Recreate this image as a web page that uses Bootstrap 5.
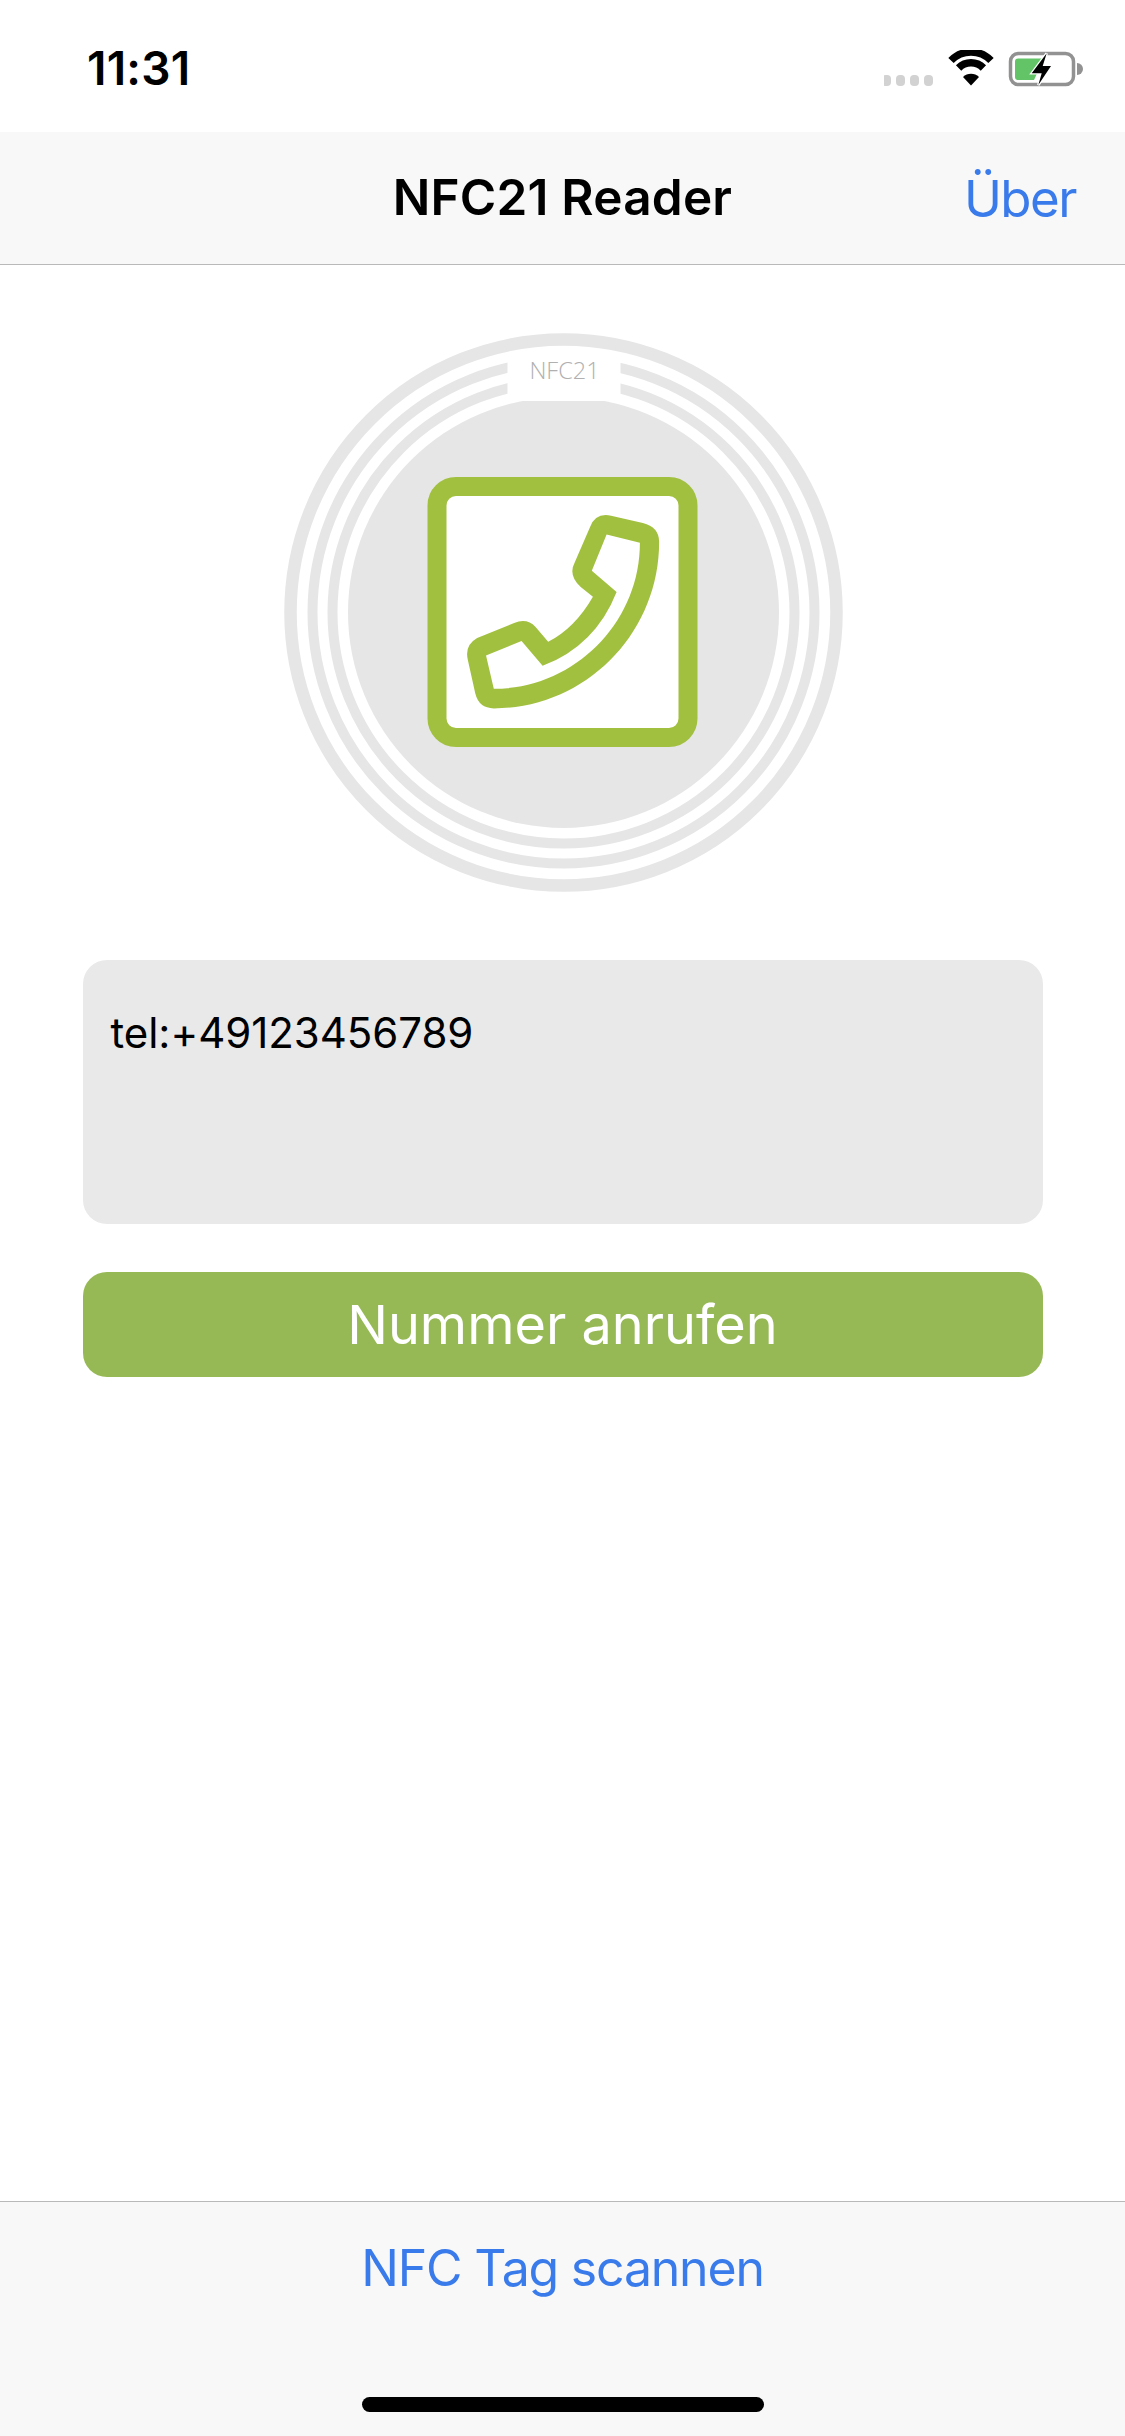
<!DOCTYPE html>
<html lang="de">
<head>
<meta charset="utf-8">
<title>NFC21 Reader</title>
<link href="https://cdn.jsdelivr.net/npm/bootstrap@5.3.0/dist/css/bootstrap.min.css" rel="stylesheet">
<style>
  html, body { height: 2436px; }
  body { font-family: Inter, "Liberation Sans", sans-serif; background: #fff; color: #000; }
  .status-strip { height: 132px; padding: 0 41px 0 87px; }
  .clock { font-size: 46px; font-weight: 600; line-height: 1; letter-spacing: .2px; margin-top: 4px; }
  .status-icons { display: block; margin-top: 8px; }
  .title-strip { height: 133px; background: #f8f8f8; border-bottom: 1px solid #b9b9b9; display: grid; grid-template-columns: 1fr auto 1fr; align-items: center; }
  .title-text { font-size: 49.5px; font-weight: 600; letter-spacing: .2px; line-height: 1; }
  .link-blue { color: #3a7bec; text-decoration: none; }
  .over-link { font-size: 51px; letter-spacing: -1.5px; line-height: 1; justify-self: end; margin-right: 49px; }
  .tag-art { display: block; width: 580px; height: 580px; margin-top: 55px; }
  .content-box { width: 960px; margin: 0 auto; }
  .value-box { height: 264px; margin-top: 60px; padding: 48px 28px; background: #e9e9e9; border: 0; border-radius: 24px; font-size: 42px; line-height: 1.2; color: #000; letter-spacing: -.05px; }
  .call-btn { height: 105px; margin-top: 48px; padding: 0; background: #97b955; border: 0; border-radius: 24px; color: #fff; font-size: 54px; font-weight: 400; line-height: 1; letter-spacing: 0; }
  .bottom-strip { height: 235px; background: #f8f8f8; border-top: 1px solid #b9b9b9; padding-top: 36px; }
  .scan-link { font-size: 50px; line-height: 60px; letter-spacing: -1.2px; }
  .home-bar { width: 402px; height: 15px; margin-top: 99px; background: #000; border-radius: 8px; }
</style>
</head>
<body class="m-0 d-flex flex-column">
  <div class="status-strip d-flex justify-content-between align-items-center bg-white">
    <span class="clock">11:31</span>
    <svg class="status-icons" width="200" height="40" viewBox="884 50 200 40">
      <g fill="#d2d2d2"><rect x="882" y="75" width="9" height="11" rx="4"/><rect x="896" y="75" width="9" height="11" rx="4"/><rect x="910" y="75" width="9" height="11" rx="4"/><rect x="924" y="75" width="9" height="11" rx="4"/></g>
      <g fill="none" stroke="#000" stroke-width="7.5">
        <path d="M951 60.5 A28 28 0 0 1 991 60.5"/>
        <path d="M958.6 68 A17.5 17.5 0 0 1 983.4 68"/>
      </g>
      <path d="M971 85.5 L963 77 A11.5 11.5 0 0 1 979 77 Z" fill="#000"/>
      <rect x="1010.5" y="53.5" width="63" height="31" rx="8" fill="none" stroke="#929292" stroke-width="3.5"/>
      <path d="M1018 58.5 H1044 L1034 80 H1018 Q1015 80 1015 77 V61.5 Q1015 58.5 1018 58.5 Z" fill="#62c466"/>
      <path d="M1077 63 A6 6 0 0 1 1077 75 Z" fill="#929292"/>
      <path d="M1046.7 53.3 L1031.7 73.3 L1041.7 73.3 L1038.3 85 L1051 66 L1042.7 66 Z" fill="#000" stroke="#fff" stroke-width="2.5" paint-order="stroke"/>
    </svg>
  </div>
  <header class="title-strip">
    <span></span>
    <span class="title-text">NFC21 Reader</span>
    <a class="over-link link-blue" href="#">Über</a>
  </header>
  <main class="flex-grow-1">
    <svg class="tag-art mx-auto" viewBox="272.5 320 580 580" role="img" aria-label="NFC21 Tag">
      <g fill="none" stroke="#e6e6e6">
        <circle cx="563" cy="612.5" r="273" stroke-width="12.5"/>
        <circle cx="563" cy="612.5" r="251" stroke-width="10"/>
        <circle cx="563" cy="612.5" r="231" stroke-width="10"/>
      </g>
      <circle cx="563" cy="612.5" r="215.5" fill="#e5e6e5"/>
      <rect x="507" y="352" width="113" height="49" fill="#fff"/>
      <text x="564" y="379" text-anchor="middle" font-family="Open Sans, sans-serif" font-weight="300" font-size="23.5" fill="#b0b0b0">NFC21</text>
      <rect x="436.5" y="486.5" width="251" height="251" rx="19" fill="#fff" stroke="#a2c03f" stroke-width="19"/>
      <g transform="translate(269.5 320) scale(.3699)">
        <path fill="#a2c03f" fill-rule="evenodd" d="M922 529 L1008 549 Q1052 560 1052 600 C1052 850 850 1050 605 1050 Q565 1050 555 1010 L535 920 Q525 880 560 860 L660 819 Q695 805 718 830 L752 870 Q825 832 873 748 L840 722 Q805 690 824 655 L865 560 Q880 520 922 529 Z M910 580 L1000 602 C1000 820 820 997 605 997 L584 907 L680 868 L737 935 Q880 880 937 735 L870 678 Z"/>
      </g>
    </svg>
    <div class="content-box">
      <div class="value-box form-control">tel:+49123456789</div>
      <button type="button" class="call-btn btn w-100">Nummer anrufen</button>
    </div>
  </main>
  <footer class="bottom-strip text-center d-flex flex-column align-items-center">
    <a class="scan-link link-blue" href="#">NFC Tag scannen</a>
    <div class="home-bar"></div>
  </footer>
  <script src="https://cdn.jsdelivr.net/npm/bootstrap@5.3.0/dist/js/bootstrap.bundle.min.js"></script>
</body>
</html>
